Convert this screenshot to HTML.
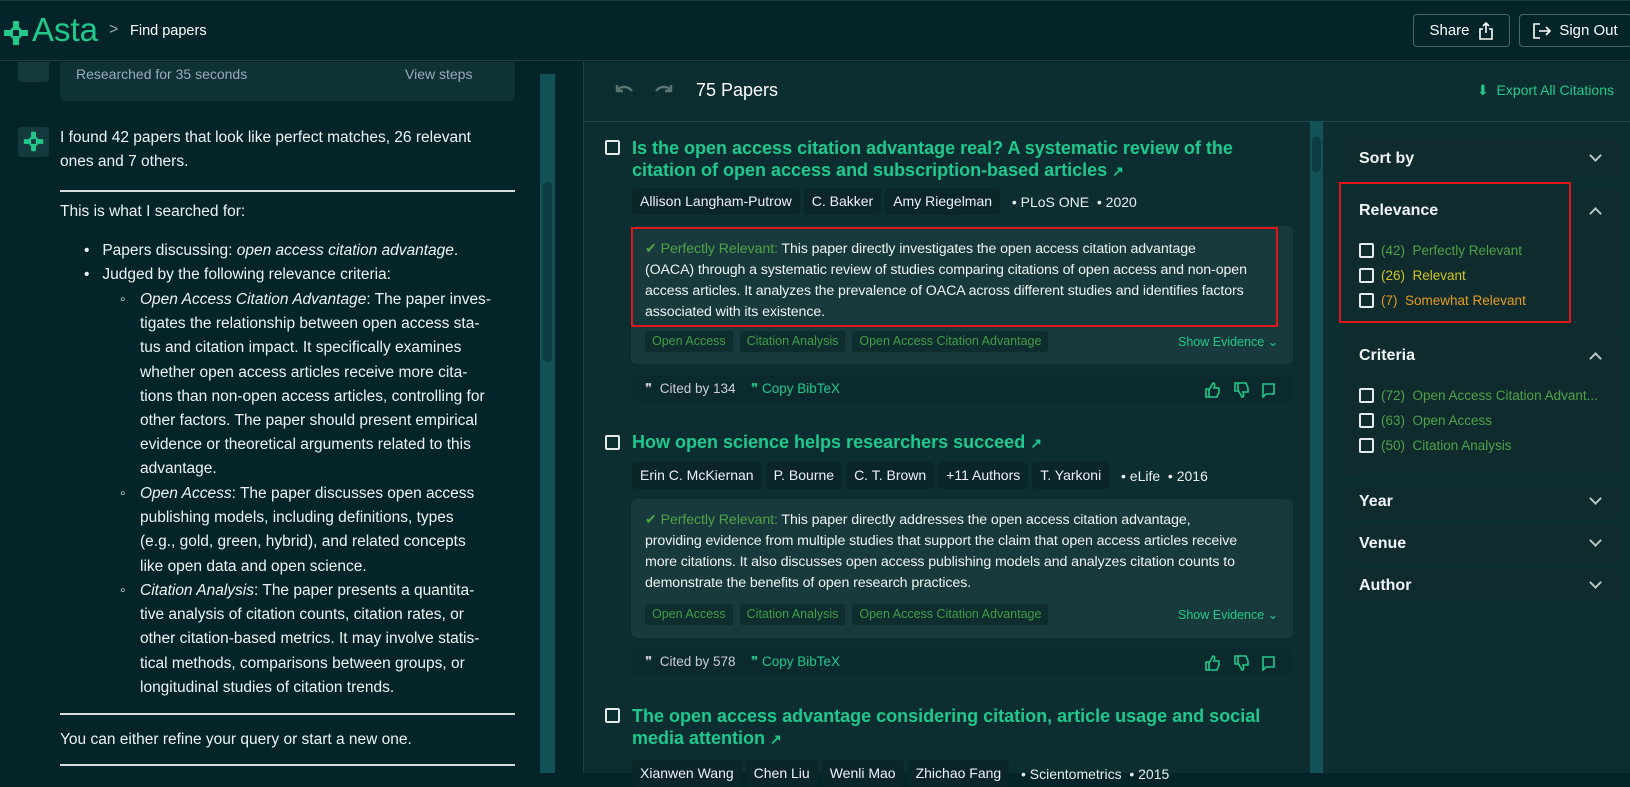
<!DOCTYPE html>
<html><head><meta charset="utf-8"><style>
*{margin:0;padding:0;box-sizing:border-box}
body{width:1630px;height:773px;overflow:hidden;background:#03252a;font-family:"Liberation Sans",sans-serif;color:#e8efee;position:relative}
.a{position:absolute}
.hdr{left:0;top:0;width:1630px;height:61px;background:#03252a;border-bottom:1px solid #1a3d41;border-top:1px solid #1a3d41}
.btn{border:1px solid #4a6468;border-radius:4px;height:33px;top:14px;font-size:15px;color:#fff;display:flex;align-items:center;justify-content:center;gap:8px}
.left{left:0;top:62px;width:583px;height:711px;background:#03252a;overflow:hidden}
.lt{position:absolute;left:60px;font-size:15.5px;line-height:24.2px;color:#eef3f2;white-space:nowrap}
.hr{position:absolute;left:60px;width:455px;height:2px;background:#d8dede}
.mid{left:583px;top:62px;width:740px;height:711px;background:#0d2e31;border-left:1px solid #1b4044}
.right{left:1323px;top:62px;width:307px;height:711px;background:#0d2e31}
.line{left:583px;top:121px;width:1047px;height:1px;background:#21464a}
.cb{position:absolute;width:15px;height:15px;border:2px solid #e6ecec;border-radius:2px}
.title{position:absolute;left:632px;font-size:18px;font-weight:bold;color:#1fc88c;line-height:22px;white-space:nowrap}
.chip{display:inline-block;background:#0a2629;border-radius:4px;padding:0 8px;height:27px;line-height:27px;font-size:14px;margin-right:4px;color:#eef}
.meta{position:absolute;left:632px;display:flex;align-items:center;font-size:14px;white-space:nowrap}
.sum{position:absolute;left:631px;width:662px;background:#183a3c;border-radius:6px}
.st{position:absolute;left:14px;font-size:14.2px;line-height:21px;color:#eef3f2;white-space:nowrap;letter-spacing:-0.1px}
.pr{color:#4ea247}
.tag{display:inline-block;background:#0f2c2f;color:#3f9e45;font-size:12.5px;padding:0 7px;height:21px;line-height:21px;border-radius:3px;margin-right:7px}
.foot{position:absolute;left:631px;width:662px;height:26px;background:#0b2a2d;border-radius:6px;font-size:13.5px}
.panel{position:absolute;left:1344px;width:276px;background:#0f2b2e;border-radius:4px}
.ph{position:absolute;left:15px;font-size:16px;font-weight:bold;color:#f1f4f4}
.chev{position:absolute;right:20px;width:9px;height:9px;border-right:2px solid #b9c6c6;border-bottom:2px solid #b9c6c6}
.dn{transform:rotate(45deg)}
.up{transform:rotate(-135deg)}
.it{position:absolute;left:15px;font-size:13.5px;white-space:nowrap;display:flex;align-items:center}
.it .cb{position:relative;margin-right:7px;width:15px;height:15px}
.ic{position:absolute;top:6px}
</style></head><body>

<div class="a hdr"></div>
<svg class="a" style="left:3px;top:20px" width="26" height="26" viewBox="0 0 26 26"><path d="M10 1h6v6l3 3h6v6h-6l-3 3v6h-6v-6l-3-3H1v-6h6l3-3z M10 10v6h6v-6z" fill="#22c98b" fill-rule="evenodd"/></svg>
<div class="a" style="left:32px;top:11px;font-size:33px;color:#22c98b">Asta</div>
<div class="a" style="left:109px;top:21px;font-size:16px;color:#9aa">&gt;</div>
<div class="a" style="left:130px;top:23px;font-size:14.5px;color:#fff">Find papers</div>
<div class="a btn" style="left:1413px;width:97px">Share <svg width="16" height="18" viewBox="0 0 16 18" fill="none" stroke="#fff" stroke-width="1.6"><path d="M5 7H2v10h12V7h-3M8 11V1M5 4l3-3 3 3"/></svg></div>
<div class="a btn" style="left:1519px;width:113px"><svg width="18" height="16" viewBox="0 0 18 16" fill="none" stroke="#fff" stroke-width="1.6"><path d="M7 1H1v14h6M6 8h11M13 4l4 4-4 4"/></svg> Sign Out</div>

<div class="a left">
 <div class="a" style="left:18px;top:-10px;width:31px;height:30px;background:#143a3d;border-radius:4px"></div>
 <div class="a" style="left:60px;top:-2px;width:455px;height:41px;background:#0f3236;border-radius:6px"></div>
 <div class="a" style="left:76px;top:4px;font-size:14px;color:#9ab">Researched for 35 seconds</div>
 <div class="a" style="left:405px;top:4px;font-size:14px;color:#9ab">View steps</div>
 <div class="a" style="left:18px;top:65px;width:31px;height:30px;background:#143a3d;border-radius:4px"></div>
 <svg class="a" style="left:23px;top:69px" width="21" height="21" viewBox="0 0 26 26"><path d="M10 1h6v6l3 3h6v6h-6l-3 3v6h-6v-6l-3-3H1v-6h6l3-3z M10 10v6h6v-6z" fill="#22c98b" fill-rule="evenodd"/></svg>
 <div class="lt" style="top:64px">I found 42 papers that look like perfect matches, 26 relevant<br>ones and 7 others.</div>
 <div class="hr" style="top:128px"></div>
 <div class="lt" style="top:138px">This is what I searched for:</div>
 <div class="lt" style="top:177px;left:84px">•&nbsp;&nbsp; Papers discussing: <i>open access citation advantage</i>.<br>•&nbsp;&nbsp; Judged by the following relevance criteria:</div>
 <div class="lt" style="top:226px;left:120px">◦</div>
 <div class="lt" style="top:226px;left:140px"><i>Open Access Citation Advantage</i>: The paper inves-<br>tigates the relationship between open access sta-<br>tus and citation impact. It specifically examines<br>whether open access articles receive more cita-<br>tions than non-open access articles, controlling for<br>other factors. The paper should present empirical<br>evidence or theoretical arguments related to this<br>advantage.</div>
 <div class="lt" style="top:420px;left:120px">◦</div>
 <div class="lt" style="top:420px;left:140px"><i>Open Access</i>: The paper discusses open access<br>publishing models, including definitions, types<br>(e.g., gold, green, hybrid), and related concepts<br>like open data and open science.</div>
 <div class="lt" style="top:517px;left:120px">◦</div>
 <div class="lt" style="top:517px;left:140px"><i>Citation Analysis</i>: The paper presents a quantita-<br>tive analysis of citation counts, citation rates, or<br>other citation-based metrics. It may involve statis-<br>tical methods, comparisons between groups, or<br>longitudinal studies of citation trends.</div>
 <div class="hr" style="top:651px"></div>
 <div class="lt" style="top:666px">You can either refine your query or start a new one.</div>
 <div class="hr" style="top:702px"></div>
 <div class="a" style="left:540px;top:12px;width:15px;height:700px;background:#125257"></div>
 <div class="a" style="left:543px;top:120px;width:9px;height:180px;background:#0d3d42;border-radius:4px"></div>
</div>

<div class="a mid"></div>
<div class="a right"></div>
<div class="a line"></div>
<svg class="a" style="left:614px;top:82px" width="60" height="16" viewBox="0 0 60 16" fill="none" stroke="#5a7473" stroke-width="2.4"><path d="M3 3v6h6M3 9c3-5 10-6 15 0"/><path d="M57 3v6h-6M57 9c-3-5-10-6-15 0"/></svg>
<div class="a" style="left:696px;top:80px;font-size:18px;color:#fff">75 Papers</div>
<div class="a" style="left:1477px;top:82px;font-size:14px;color:#22c98b">⬇&nbsp; Export All Citations</div>
<div class="a" style="left:1310px;top:121px;width:13px;height:652px;background:#125257"></div>
<div class="a" style="left:1312px;top:137px;width:9px;height:35px;background:#0d3d42;border-radius:4px"></div>

<!-- card 1 -->
<div class="cb" style="left:605px;top:140px"></div>
<div class="title" style="top:137px">Is the open access citation advantage real? A systematic review of the<br>citation of open access and subscription-based articles <span style="font-size:14px">↗</span></div>
<div class="meta" style="top:188px"><span class="chip">Allison Langham-Putrow</span><span class="chip">C. Bakker</span><span class="chip">Amy Riegelman</span>&nbsp; • PLoS ONE &nbsp;• 2020</div>
<div class="sum" style="top:226px;height:138px">
 <div class="st" style="top:13px"><span class="pr">✔ Perfectly Relevant:</span> This paper directly investigates the open access citation advantage<br>(OACA) through a systematic review of studies comparing citations of open access and non-open<br>access articles. It analyzes the prevalence of OACA across different studies and identifies factors<br>associated with its existence.</div>
 <div class="a" style="left:14px;top:105px"><span class="tag">Open Access</span><span class="tag">Citation Analysis</span><span class="tag">Open Access Citation Advantage</span></div>
 <div class="a" style="left:547px;top:108px;font-size:12.5px;color:#22c98b">Show Evidence ⌄</div>
</div>
<div class="a" style="left:631px;top:227px;width:647px;height:100px;border:2px solid #e0161a"></div>
<div class="foot" style="top:376px"><span class="a" style="left:14px;top:5px;color:#ccd">❞&nbsp; Cited by 134</span><span class="a" style="left:120px;top:5px;color:#22c98b">❞ Copy BibTeX</span>
 <svg class="ic" style="left:574px" width="70" height="16" viewBox="0 0 70 16" fill="none" stroke="#22c98b" stroke-width="1.6"><path d="M1 7h3v8H1zM4 8l4-7c2 0 2 2 1 5h5v4l-2 5H4"/><path d="M30 9h3V1h-3zM33 8l4 7c2 0 2-2 1-5h5V6l-2-5h-8"/><path d="M58 2h11v10H61l-3 3z"/></svg></div>

<!-- card 2 -->
<div class="cb" style="left:605px;top:435px"></div>
<div class="title" style="top:431px">How open science helps researchers succeed <span style="font-size:14px">↗</span></div>
<div class="meta" style="top:462px"><span class="chip">Erin C. McKiernan</span><span class="chip">P. Bourne</span><span class="chip">C. T. Brown</span><span class="chip">+11 Authors</span><span class="chip">T. Yarkoni</span>&nbsp; • eLife &nbsp;• 2016</div>
<div class="sum" style="top:499px;height:139px">
 <div class="st" style="top:11px"><span class="pr">✔ Perfectly Relevant:</span> This paper directly addresses the open access citation advantage,<br>providing evidence from multiple studies that support the claim that open access articles receive<br>more citations. It also discusses open access publishing models and analyzes citation counts to<br>demonstrate the benefits of open research practices.</div>
 <div class="a" style="left:14px;top:105px"><span class="tag">Open Access</span><span class="tag">Citation Analysis</span><span class="tag">Open Access Citation Advantage</span></div>
 <div class="a" style="left:547px;top:108px;font-size:12.5px;color:#22c98b">Show Evidence ⌄</div>
</div>
<div class="foot" style="top:649px"><span class="a" style="left:14px;top:5px;color:#ccd">❞&nbsp; Cited by 578</span><span class="a" style="left:120px;top:5px;color:#22c98b">❞ Copy BibTeX</span>
 <svg class="ic" style="left:574px" width="70" height="16" viewBox="0 0 70 16" fill="none" stroke="#22c98b" stroke-width="1.6"><path d="M1 7h3v8H1zM4 8l4-7c2 0 2 2 1 5h5v4l-2 5H4"/><path d="M30 9h3V1h-3zM33 8l4 7c2 0 2-2 1-5h5V6l-2-5h-8"/><path d="M58 2h11v10H61l-3 3z"/></svg></div>

<!-- card 3 -->
<div class="cb" style="left:605px;top:708px"></div>
<div class="title" style="top:705px">The open access advantage considering citation, article usage and social<br>media attention <span style="font-size:14px">↗</span></div>
<div class="meta" style="top:760px"><span class="chip">Xianwen Wang</span><span class="chip">Chen Liu</span><span class="chip">Wenli Mao</span><span class="chip">Zhichao Fang</span>&nbsp; • Scientometrics &nbsp;• 2015</div>

<!-- right panel -->
<div class="panel" style="top:139px;height:40px"><div class="ph" style="top:11px">Sort by</div><div class="chev dn" style="top:12px"></div></div>
<div class="panel" style="top:190px;height:143px"><div class="ph" style="top:12px">Relevance</div><div class="chev up" style="top:19px"></div>
 <div class="it" style="top:53px"><span class="cb"></span><span style="color:#4ea247">(42)&nbsp; Perfectly Relevant</span></div>
 <div class="it" style="top:78px"><span class="cb"></span><span style="color:#cfc51b">(26)&nbsp; Relevant</span></div>
 <div class="it" style="top:103px"><span class="cb"></span><span style="color:#e59a22">(7)&nbsp; Somewhat Relevant</span></div>
</div>
<div class="a" style="left:1339px;top:182px;width:232px;height:141px;border:2px solid #e0161a"></div>
<div class="panel" style="top:335px;height:140px"><div class="ph" style="top:12px">Criteria</div><div class="chev up" style="top:19px"></div>
 <div class="it" style="top:53px"><span class="cb"></span><span style="color:#4ea247">(72)&nbsp; Open Access Citation Advant...</span></div>
 <div class="it" style="top:78px"><span class="cb"></span><span style="color:#4ea247">(63)&nbsp; Open Access</span></div>
 <div class="it" style="top:103px"><span class="cb"></span><span style="color:#4ea247">(50)&nbsp; Citation Analysis</span></div>
</div>
<div class="panel" style="top:484px;height:36px"><div class="ph" style="top:9px">Year</div><div class="chev dn" style="top:10px"></div></div>
<div class="panel" style="top:526px;height:36px"><div class="ph" style="top:9px">Venue</div><div class="chev dn" style="top:10px"></div></div>
<div class="panel" style="top:568px;height:36px"><div class="ph" style="top:9px">Author</div><div class="chev dn" style="top:10px"></div></div>
</body></html>
